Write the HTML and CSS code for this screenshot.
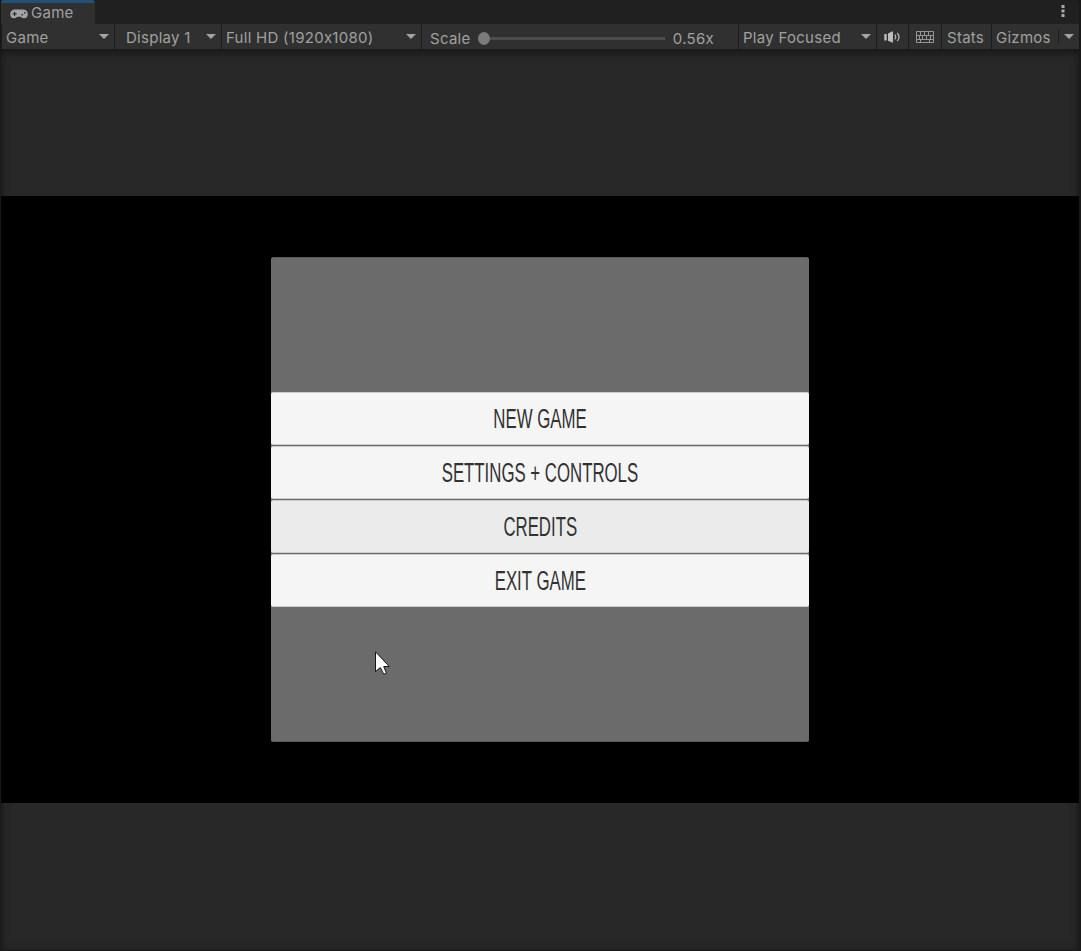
FILE: index.html
```html
<!DOCTYPE html>
<html lang="en">
<head>
<meta charset="utf-8">
<title>Game</title>
<link rel="stylesheet" href="styles.css">
</head>
<body>
<div class="window">
  <header class="tabs">
    <div class="tab">
      <svg class="pad" width="18" height="10" viewBox="0 0 18 10"><path fill="#a4a4a4" fill-rule="evenodd" d="M4.500 .5H13.500C19.200 .8 19.100 9.300 14 9.300C12.300 9.300 11.500 8 10.500 7.700H7.500C6.500 8 5.700 9.300 4 9.300C-1.100 9.300 -1.200 .8 4.500 .5ZM4 2.800V4.300H2.500V5.500H4V7H5.200V5.500H6.700V4.300H5.200V2.800ZM11.500 5V6.500H13V5ZM14 3V4.500H15.500V3Z"/></svg>
      <span>Game</span>
    </div>
    <svg class="more" width="4" height="12" viewBox="0 0 4 12"><path fill="#aaa" d="M.5 0h3v3h-3zM.5 4.500h3v3h-3zM.5 9h3v3h-3z"/></svg>
  </header>
  <nav class="toolbar">
    <div class="cell view"><span>Game</span><i class="arrow"></i></div>
    <div class="cell display"><span>Display 1</span><i class="arrow"></i></div>
    <div class="cell resolution"><span>Full HD (1920x1080)</span><i class="arrow"></i></div>
    <div class="cell scale"><span>Scale</span><div class="slider"><i class="knob"></i><i class="track"></i></div><span>0.56x</span></div>
    <div class="cell play"><span>Play Focused</span><i class="arrow"></i></div>
    <div class="cell sound"><svg width="17" height="12" viewBox="0 0 17 12"><path fill="#bcbcbc" d="M.3 3h2.400v6.500H.3zM4 2.500L8 .5H9v11H8L4 9.800z"/><path fill="none" stroke="#b4b4b4" stroke-width="1.300" d="M10.800 3.700Q12.600 6 10.800 8.300M13.200 1.800Q16.800 6 13.200 10.200"/></svg></div>
    <div class="cell keys"><svg width="18" height="12" viewBox="0 0 18 12"><path fill="none" stroke="#969696" d="M.5 .5h17v11H.5zM1 4.500h16M1 8.500h16M4.500 1v3M8.500 1v3M12.500 1v3M3.500 5v3M6.500 5v3M10.500 5v3M14.500 5v3M4.500 9v3M13.500 9v3"/></svg></div>
    <div class="cell stats"><span>Stats</span></div>
    <div class="cell gizmos"><span>Gizmos</span><i class="split"></i><i class="arrow"></i></div>
  </nav>
  <main class="stage">
    <div class="screen">
      <div class="menu">
        <button class="item"><span>NEW GAME</span></button>
        <button class="item"><span>SETTINGS + CONTROLS</span></button>
        <button class="item active"><span>CREDITS</span></button>
        <button class="item"><span>EXIT GAME</span></button>
      </div>
    </div>
  </main>
  <svg class="cursor" width="16" height="25" viewBox="0 0 16 25"><path fill="#fff" stroke="#15151f" d="M.5 .8V20.500L5.300 16.600L8.800 23.300L11.500 22.200L8.700 15.500H14.300Z"/></svg>
</div>
</body>
</html>
```
FILE: styles.css
```css
* { box-sizing: border-box; }
body { margin: 0; background: #191919; }
.window {
  position: relative;
  width: 1081px;
  height: 951px;
  display: flex;
  flex-direction: column;
  overflow: hidden;
  padding: 0 2px 1px 1px;
  background: #191919;
  color: #a0a0a0;
  font: 15px/20px Inter, sans-serif;
  letter-spacing: .27px;
}
.tabs {
  height: 24px;
  flex: none;
  display: flex;
  justify-content: space-between;
  background: #202020;
  padding-right: 14px;
  border-radius: 0 4px 0 0;
}
.tab {
  width: 94px;
  border-top: 3px solid #215078;
  border-radius: 3px 3px 0 0;
  background: #303030;
  display: flex;
  padding-left: 9px;
  gap: 3px;
}
.pad { margin-top: 6px; }
.more { margin-top: 5px; }
.toolbar {
  height: 26px;
  flex: none;
  display: flex;
  border: solid #1b1b1b;
  border-width: 0 0 1px 1px;
}
.cell {
  flex: none;
  display: flex;
  align-items: center;
  justify-content: space-between;
  background: #303030;
  border-right: 1px solid #1c1c1c;
  padding: 0 5.5px 0 4px;
  white-space: nowrap;
}
.cell > span { margin-top: 2px; }
.cell svg { flex: none; }
.arrow {
  border: 5px solid transparent;
  border-top-color: #a4a4a4;
  border-bottom: 0;
}
.view { width: 113px; }
.display { width: 107px; padding-left: 11px; }
.resolution { width: 200px; }
.scale { width: 317px; padding: 2px 24px 0 8px; }
.slider {
  width: 187px;
  height: 15px;
  display: flex;
  align-items: center;
  margin: 1px 0 0;
}
.knob { width: 12px; height: 13px; border-radius: 50%; background: #7b7b7b; }
.track { flex: 1; height: 3px; background: #4c4c4c; }
.play { width: 138px; }
.sound { width: 32px; padding: 0 0 0 7px; }
.keys { width: 33px; padding: 0 7px; }
.stats { width: 50px; padding: 0 0 0 5px; }
.gizmos { width: 87px; border-right: 0; }
.split { width: 1px; height: 15px; background: #1c1c1c; margin-left: 2px; }
.stage {
  flex: 1;
  display: flex;
  align-items: center;
  background: #282828;
  box-shadow: inset 0 2px 9px 0 #151515;
  padding-bottom: 1px;
}
.screen {
  flex: 1;
  height: 607px;
  background: #000;
  display: flex;
  align-items: center;
  justify-content: center;
}
.menu {
  width: 538px;
  height: 485px;
  border: solid #5b5b5b;
  border-width: 1px 0;
  border-radius: 2px;
  background: #6b6b6b;
  display: flex;
  flex-direction: column;
  justify-content: center;
  gap: 1px;
}
.item {
  height: 53px;
  border: solid #ccc;
  border-width: 1px 0;
  border-radius: 2px;
  background: #f5f5f5;
  color: #323232;
  padding: 0;
  font: 27px/30px "Liberation Sans", Arial, sans-serif;
  white-space: nowrap;
  display: flex;
  align-items: center;
  justify-content: center;
}
.item span { transform: scaleX(.622); }
.item.active { background: #ebebeb; }
.cursor { position: absolute; left: 375px; top: 651px; }
```
